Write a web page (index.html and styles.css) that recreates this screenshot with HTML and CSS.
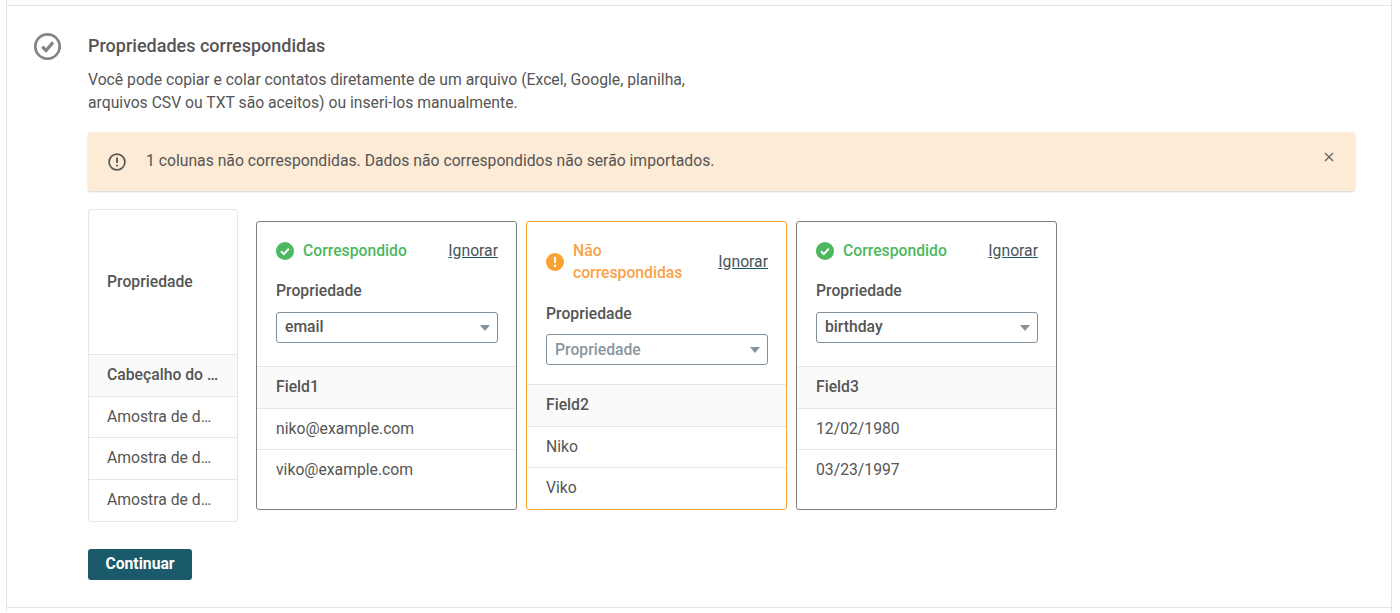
FILE: index.html
```html
<!DOCTYPE html>
<html lang="pt">
<head>
<meta charset="utf-8">
<title>Propriedades correspondidas</title>
<link rel="stylesheet" href="styles.css">
</head>
<body>
<div class="wrap">
<section class="panel">
  <svg class="step-icon" width="28" height="28" viewBox="0 0 28 28" aria-hidden="true">
    <circle cx="14.5" cy="14.5" r="12.2" fill="none" stroke="#848484" stroke-width="2.8"/>
    <path d="M9.3 14.7l3.7 3.9 7-8.2" fill="none" stroke="#848484" stroke-width="3.2"/>
  </svg>
  <div class="content">
    <h2 class="title">Propriedades correspondidas</h2>
    <p class="desc">Você pode copiar e colar contatos diretamente de um arquivo (Excel, Google, planilha,<br>arquivos CSV ou TXT são aceitos) ou inseri-los manualmente.</p>
    <div class="alert">
      <svg class="alert-icon" width="18" height="18" viewBox="0 0 18 18" aria-hidden="true">
        <circle cx="9" cy="9" r="7.9" fill="none" stroke="#555" stroke-width="1.7"/>
        <path d="M9 4.5v5.6M9 11.8v1.8" fill="none" stroke="#555" stroke-width="1.8"/>
      </svg>
      <span class="alert-text">1 colunas não correspondidas. Dados não correspondidos não serão importados.</span>
      <svg class="alert-close" width="10" height="10" viewBox="0 0 10 10" aria-hidden="true">
        <path d="M1 1l8 8M9 1l-8 8" fill="none" stroke="#666" stroke-width="1.4"/>
      </svg>
    </div>
    <div class="mapping">
      <div class="legend">
        <div class="legend-head">Propriedade</div>
        <div class="legend-row legend-strong">Cabeçalho do arquivo</div>
        <div class="legend-row">Amostra de dados</div>
        <div class="legend-row legend-tall">Amostra de dados</div>
        <div class="legend-row">Amostra de dados</div>
      </div>
      <div class="card">
        <div class="card-top">
          <div class="card-status">
            <svg class="status-icon" width="18" height="18" viewBox="0 0 18 18" aria-hidden="true"><circle cx="9" cy="9" r="9" fill="#4cb860"/><path d="M5 9.3l2.8 2.8 5-5.4" fill="none" stroke="#fff" stroke-width="2"/></svg>
            <span class="status-text status-ok">Correspondido</span>
            <a class="ignore" href="#">Ignorar</a>
          </div>
          <div class="field-label">Propriedade</div>
          <div class="select"><span>email</span><i class="caret"></i></div>
        </div>
        <div class="card-row card-strong">Field1</div>
        <div class="card-row">niko@example.com</div>
        <div class="card-row card-last">viko@example.com</div>
      </div>
      <div class="card card-warn">
        <div class="card-top">
          <div class="card-status">
            <svg class="status-icon" width="18" height="18" viewBox="0 0 18 18" aria-hidden="true"><circle cx="9" cy="9" r="9" fill="#f9a233"/><path d="M9 3.8v6.2M9 11.8v2.2" fill="none" stroke="#fff" stroke-width="2.2"/></svg>
            <span class="status-text status-warn">Não correspondidas</span>
            <a class="ignore" href="#">Ignorar</a>
          </div>
          <div class="field-label">Propriedade</div>
          <div class="select select-empty"><span>Propriedade</span><i class="caret"></i></div>
        </div>
        <div class="card-row card-strong">Field2</div>
        <div class="card-row">Niko</div>
        <div class="card-row card-last">Viko</div>
      </div>
      <div class="card">
        <div class="card-top">
          <div class="card-status">
            <svg class="status-icon" width="18" height="18" viewBox="0 0 18 18" aria-hidden="true"><circle cx="9" cy="9" r="9" fill="#4cb860"/><path d="M5 9.3l2.8 2.8 5-5.4" fill="none" stroke="#fff" stroke-width="2"/></svg>
            <span class="status-text status-ok">Correspondido</span>
            <a class="ignore" href="#">Ignorar</a>
          </div>
          <div class="field-label">Propriedade</div>
          <div class="select"><span>birthday</span><i class="caret"></i></div>
        </div>
        <div class="card-row card-strong">Field3</div>
        <div class="card-row">12/02/1980</div>
        <div class="card-row card-last">03/23/1997</div>
      </div>
    </div>
    <button class="continue" type="button">Continuar</button>
  </div>
</section>
</div>
</body>
</html>
```

FILE: styles.css
```css
* { box-sizing: border-box; }
html, body { margin: 0; height: 613px; overflow: hidden; background: #fff; }
body {
  font-family: Roboto, "Liberation Sans", sans-serif;
  font-size: 15.72px;
  color: #555;
}
.wrap {
  width: 1386px;
  height: 612px;
  margin-left: 6px;
  padding-top: 5px;
  border-left: 1px solid #e4e4e4;
  border-right: 1px solid #e4e4e4;
}
.panel {
  display: flex;
  height: 603px;
  border-top: 1px solid #e4e4e4;
  border-bottom: 1px solid #e4e4e4;
  padding: 26px 36px 0 26px;
}
.step-icon { flex: none; margin-right: 27px; }
.content { flex: 1; min-width: 0; }
.title { margin: 3px 0 0; font-size: 18px; line-height: 22px; font-weight: 500; color: #555; }
.desc { margin: 11px 0 0; line-height: 23px; color: #555; }
.alert {
  display: flex;
  align-items: center;
  height: 59px;
  margin-top: 18px;
  padding: 0 21px 2px 20px;
  background: #fdebd6;
  border-radius: 3px;
  box-shadow: 0 1px 2px rgba(0,0,0,.18);
}
.alert-icon { flex: none; margin: 2px 20px 0 0; }
.alert-text { flex: 1; }
.alert-close { flex: none; align-self: flex-start; margin-top: 20px; }
.mapping { display: flex; align-items: stretch; margin-top: 18px; }
.legend {
  flex: none;
  width: 150px;
  border: 1px solid #e6e6e6;
  border-radius: 3px;
}
.legend-head {
  display: flex;
  align-items: center;
  height: 145px;
  padding: 0 18px 2px;
  font-weight: 500;
  border-bottom: 1px solid #e6e6e6;
}
.legend-row {
  height: 41px;
  line-height: 40px;
  padding: 0 18px;
  white-space: nowrap;
  overflow: hidden;
  text-overflow: ellipsis;
  border-bottom: 1px solid #e6e6e6;
}
.legend-row:last-child { border-bottom: 0; }
.legend-strong { background: #fafafa; font-weight: 500; height: 42px; }
.legend-tall { height: 42px; line-height: 39px; }
.card {
  flex: none;
  width: 261px;
  margin: 12px 0 12px 9px;
  border: 1px solid #7f7f7f;
  border-radius: 3px;
}
.legend + .card { margin-left: 18px; }
.card-warn { border-color: #f9a233; }
.card-top {
  min-height: 145px;
  padding: 18px 18px 18.6px 19px;
  border-bottom: 1px solid #e6e6e6;
}
.card-status { display: flex; align-items: center; }
.status-icon { flex: none; margin-right: 9px; }
.status-text { flex: 1; line-height: 22.4px; font-weight: 500; }
.status-ok { color: #4cb860; }
.status-warn { color: #f9a247; padding-right: 30px; }
.ignore { flex: none; margin-bottom: 2px; color: #4a5459; text-decoration: underline; text-decoration-color: #1a5a6a; }
.field-label { margin-top: 18px; line-height: 22px; font-weight: 500; }
.select {
  position: relative;
  height: 31px;
  margin-top: 9.6px;
  padding: 0 8px;
  line-height: 28px;
  font-weight: 500;
  border: 1px solid #7f8f9c;
  border-radius: 3px;
}
.select-empty { color: #8a959e; line-height: 29px; }
.caret {
  position: absolute;
  right: 7px;
  top: 12px;
  border-left: 5px solid transparent;
  border-right: 5px solid transparent;
  border-top: 6px solid #85929d;
}
.card-row {
  height: 41px;
  line-height: 40px;
  padding: 0 19px;
  border-bottom: 1px solid #e6e6e6;
}
.card-strong { height: 42px; background: #fafafa; font-weight: 500; }
.card-last { border-bottom: 0; }
.continue {
  display: block;
  width: 104px;
  height: 31px;
  margin-top: 27px;
  padding: 0 0 2px;
  border: 0;
  border-radius: 3px;
  background: #1a5a6a;
  color: #fff;
  font: 700 15.72px/27px Roboto, "Liberation Sans", sans-serif;
}
```
